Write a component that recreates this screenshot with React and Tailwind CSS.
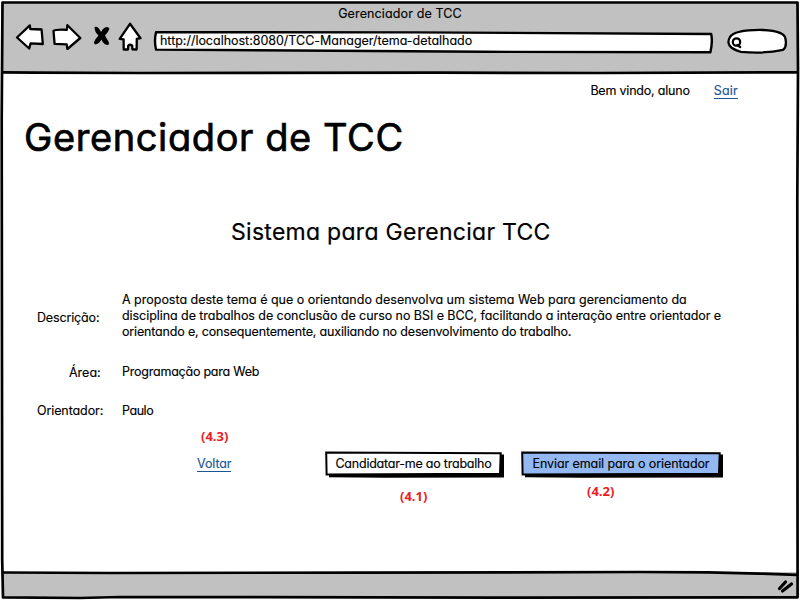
import React from "react";

const ink = { fill: "none", stroke: "#000", strokeLinecap: "round", strokeLinejoin: "round" };

function WindowFrame() {
  return (
    <svg className="pointer-events-none absolute inset-0" width="800" height="600" {...ink} strokeWidth="2.7">
      <path d="M2.5 2.5 L797.5 2.5 L798 70 L797.3 200 L797.6 597.3 L500 597.6 L120 597 L80 598 L3 597.4 L2.2 560 L1.7 120 Z" />
      <path d="M3 72.3 L35 72.6 L140 73 L440 72.7 L600 73 L797 72.3" />
      <path d="M3 572.5 L110 573 L360 572.6 L640 572 L708 572.3 L760 573.6 L797 574.8" />
    </svg>
  );
}

function BackIcon() {
  return (
    <svg width="30" height="28" viewBox="0 0 30 28" {...ink} fill="#fff" strokeWidth="2.3">
      <path d="M2 15.5 L14.8 3.4 L15.3 7 L26.6 7.5 L27.8 22 L15.6 21.4 L14.2 26.5 Z" />
    </svg>
  );
}

function ForwardIcon() {
  return (
    <svg width="30" height="28" viewBox="0 0 30 28" {...ink} fill="#fff" strokeWidth="2.3">
      <path d="M1.5 9 Q3 7.2 14.8 7.8 L15.4 3.2 L28.3 16 L15.4 27 L14.7 22.3 L2.6 21.8 Z" />
    </svg>
  );
}

function CloseIcon() {
  return (
    <svg width="18" height="22" viewBox="0 0 18 22" fill="#000">
      <path d="M1.5 3 Q5 1.5 8 8 Q10.5 3 14.5 3 L16.5 4.5 Q15.5 8 12 11.5 Q14.5 16 16 18.5 L15.5 21 Q10.5 21 8.5 15.5 Q6 20 2 20.5 L0.8 18.5 Q2.5 14.5 5.5 11.5 Q1.5 8 1.5 3Z" />
    </svg>
  );
}

function HomeIcon() {
  return (
    <svg width="24" height="30" viewBox="0 0 24 30" {...ink} fill="#fff" strokeWidth="2.3">
      <path d="M12 2.8 L22.5 17.2 L18.8 17.8 L18.6 28.5 L14.4 28.3 L14.2 24.6 Q12 22.8 10.2 24.7 L10 28.5 L5.7 28.5 L5.6 18.3 L1.7 17.8 Z" />
    </svg>
  );
}

function AddressBar({ children }) {
  return (
    <div className="relative ml-[11px] mt-[29px] h-[24px] w-[560px] pl-[7px] pt-[2px]">
      <svg className="absolute inset-0" width="560" height="24" {...ink} fill="#fff" strokeWidth="2.4">
        <path d="M3 1.2 L260 1.4 L558.2 3 Q559.8 11 557.4 21.2 L330 20.8 L180 19.7 L3 18.6 Q1 10 3 1.2Z" />
      </svg>
      <p className="relative tracking-[-0.02px]">{children}</p>
    </div>
  );
}

function SearchBox() {
  return (
    <svg className="ml-[14px] mt-[26px]" width="62" height="28" {...ink} fill="#fff" strokeWidth="2.3">
      <path d="M3 9 Q8 1.5 36 2 Q58 3 58.5 11 Q60 19 56 21.8 Q38 26 14 23.8 Q-3 19 3 9Z" />
      <circle cx="9.5" cy="14" r="3.7" strokeWidth="2.2" />
      <path d="M10.5 17 L13.2 19" />
    </svg>
  );
}

function SketchButton({ width, fill, className, children }) {
  const w = width;
  return (
    <button className={`relative h-[27px] text-center ${className}`} style={{ width: w }}>
      <svg className="absolute inset-0" width={w} height="27" viewBox={`0 0 ${w} 27`}>
        <path d={`M5 3.5 H${w} V26.4 L60 26.7 L4 26.3 Z`} fill="#000" />
        <path
          d={`M1.2 1.4 L60 1.7 L${w - 3.3} 2.2 L${w - 4} 22.8 L1.6 23.4 Z`}
          fill={fill}
          stroke="#000"
          strokeWidth="2"
        />
      </svg>
      <span className="relative -left-px -top-px">{children}</span>
    </button>
  );
}

function Note({ className, children }) {
  return (
    <span className={`font-['Open_Sans','Noto_Sans',sans-serif] text-[13px] font-bold leading-4 text-[#ed1c24] [-webkit-text-stroke:0px] ${className}`}>
      {children}
    </span>
  );
}

export default function App() {
  return (
    <div className="relative flex h-[600px] w-[800px] flex-col overflow-hidden whitespace-nowrap bg-white font-['Inter','Liberation_Sans',sans-serif] text-[12.5px] leading-4 text-black [-webkit-text-stroke:0.15px] [font-feature-settings:'cv11']">
      <header className="relative mx-[2px] mt-[2px] h-[71px] bg-[#c1c1c1]">
        <h1 className="absolute left-0 top-[4px] w-full text-center tracking-[0.13px]">Gerenciador de TCC</h1>
        <nav className="flex pl-[13px]">
          <div className="mt-[20px]"><BackIcon /></div>
          <div className="ml-[7px] mt-[20px]"><ForwardIcon /></div>
          <div className="ml-[11px] mt-[22px]"><CloseIcon /></div>
          <div className="ml-[7px] mt-[19px]"><HomeIcon /></div>
          <AddressBar>http://localhost:8080/TCC-Manager/tema-detalhado</AddressBar>
          <SearchBox />
        </nav>
      </header>

      <main className="flex h-[499px] flex-col">
        <div className="mt-[10px] flex justify-end pr-[62px]">
          <span className="tracking-[-0.2px]">Bem vindo, aluno</span>
          <a className="ml-[24px] border-b border-[#1b5595] leading-[15px] tracking-[0.2px] text-[#1b5595]">Sair</a>
        </div>
        <h2 className="ml-[24px] mt-[14px] text-[38px] leading-[48px] tracking-[0.6px] [-webkit-text-stroke:0.7px]">Gerenciador de TCC</h2>
        <h3 className="ml-[231px] mt-[56px] text-[23px] leading-[30px] tracking-[0.28px] [-webkit-text-stroke:0.2px]">Sistema para Gerenciar TCC</h3>

        <dl className="ml-[37px] mt-[45px] grid grid-cols-[85px_1fr]">
          <dt className="pt-[18px] tracking-[-0.15px]">Descrição:</dt>
          <dd>
            <p className="tracking-[-0.01px]">A proposta deste tema é que o orientando desenvolva um sistema Web para gerenciamento da</p>
            <p className="tracking-[-0.06px]">disciplina de trabalhos de conclusão de curso no BSI e BCC, facilitando a interação entre orientador e</p>
            <p className="tracking-[-0.17px]">orientando e, consequentemente, auxiliando no desenvolvimento do trabalho.</p>
          </dd>
          <dt className="pl-[32px] pt-[25px]">Área:</dt>
          <dd className="pt-[24px] tracking-[-0.23px]">Programação para Web</dd>
          <dt className="pt-[22px] tracking-[-0.1px]">Orientador:</dt>
          <dd className="pt-[22px] tracking-[-0.45px]">Paulo</dd>
        </dl>

        <div className="mt-[10px] flex">
          <div className="ml-[197px] flex w-[128px] flex-col items-start">
            <Note className="-mt-px ml-[4px]">(4.3)</Note>
            <a className="mt-[12px] border-b border-[#1b5595] leading-[15px] tracking-[-0.1px] text-[#1b5595]">Voltar</a>
          </div>
          <div className="mt-[22px] flex flex-col">
            <SketchButton width={179} fill="#fff" className="tracking-[-0.22px]">Candidatar-me ao trabalho</SketchButton>
            <Note className="ml-[75px] mt-[10px]">(4.1)</Note>
          </div>
          <div className="ml-[17px] mt-[22px] flex flex-col">
            <SketchButton width={202} fill="#94b9f2" className="tracking-[-0.09px]">Enviar email para o orientador</SketchButton>
            <Note className="ml-[66px] mt-[5px]">(4.2)</Note>
          </div>
        </div>
      </main>

      <footer className="mx-[2px] flex h-[26px] justify-end bg-[#c1c1c1]">
        <svg className="mr-[3px] mt-[7px]" width="18" height="16" {...ink} strokeWidth="3.2">
          <path d="M2.5 9.5 L8.5 3 M5.5 12 L14.5 5" />
        </svg>
      </footer>
      <WindowFrame />
    </div>
  );
}
